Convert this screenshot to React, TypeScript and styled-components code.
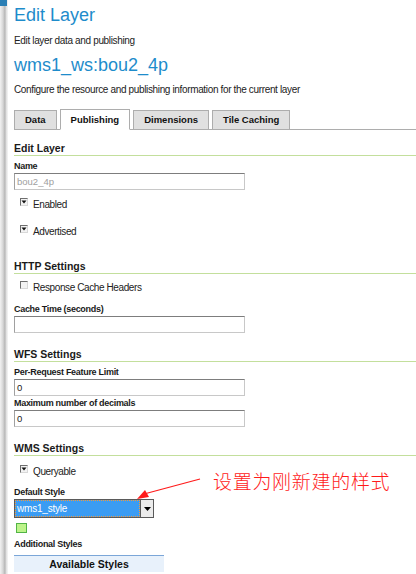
import React from "react";
import styled, { createGlobalStyle } from "styled-components";

const Global = createGlobalStyle`
  html, body { margin: 0; padding: 0; background: #fff; }
  body { font-family: "Liberation Sans", Arial, sans-serif; font-size: 10px; color: #222; }
  #root { width: 416px; height: 574px; overflow: hidden; }
`;

const Frame = styled.div`
  display: flex;
  width: 416px;
  height: 574px;
  overflow: hidden;
  position: relative;
`;

const EdgeBar = styled.div`
  width: 8px;
  flex: none;
  background: linear-gradient(to right, #f2f2f2 0px, #d6d6d6 3px, #b4b4b4 5px, #dcdcdc 6px, #f6f6f6 8px);
  position: relative;
  &::before {
    content: "";
    position: absolute;
    left: 0;
    top: 0;
    width: 7px;
    height: 6px;
    background: #2b7fb5;
  }
`;

const Content = styled.div`
  flex: 1;
  padding: 4px 0 0 6px;
`;

const Title = styled.h1<{ $top: number }>`
  margin: ${(p) => p.$top}px 0 0 0;
  font-family: "Liberation Sans", Arial, sans-serif;
  font-weight: normal;
  font-size: 18px;
  color: #1e8ccb;
  line-height: 22px;
`;

const Sub = styled.p<{ $top: number }>`
  margin: ${(p) => p.$top}px 0 0 0;
  font-size: 10px;
  letter-spacing: -0.35px;
  line-height: 14px;
  color: #222;
`;

const Tabs = styled.div`
  display: flex;
  align-items: flex-end;
  gap: 3px;
  margin-top: 13px;
  border-bottom: 1px solid #adadad;
  height: 19px;
`;

const Tab = styled.div<{ $active?: boolean }>`
  height: ${(p) => (p.$active ? 21 : 19)}px;
  margin-bottom: ${(p) => (p.$active ? -1 : 0)}px;
  padding: 0 10px;
  background: ${(p) => (p.$active ? "#fff" : "#e0e0e0")};
  border: 1px solid #adadad;
  border-bottom: ${(p) => (p.$active ? "1px solid #fff" : "none")};
  box-sizing: border-box;
  font-weight: bold;
  font-size: 9.5px;
  line-height: ${(p) => (p.$active ? 20 : 18)}px;
  color: #111;
`;

const SectionHead = styled.h3<{ $top: number }>`
  margin: ${(p) => p.$top}px 0 0 0;
  font-size: 10.5px;
  font-weight: bold;
  line-height: 14px;
  border-bottom: 1px solid #c3df9c;
  color: #1a1a1a;
`;

const Label = styled.div<{ $top: number }>`
  margin-top: ${(p) => p.$top}px;
  font-size: 9px;
  letter-spacing: -0.3px;
  font-weight: bold;
  line-height: 11px;
  color: #1a1a1a;
`;

const Input = styled.div<{ $muted?: boolean }>`
  margin-top: 1px;
  width: 231px;
  height: 17px;
  box-sizing: border-box;
  border: 1px solid #c8c8c8;
  border-top-color: #7d7d7d;
  border-left-color: #a0a0a0;
  padding: 0 2px;
  font-size: 9.5px;
  line-height: 15px;
  color: ${(p) => (p.$muted ? "#a0a0a0" : "#222")};
`;

const CheckRow = styled.div<{ $top: number }>`
  display: flex;
  align-items: flex-start;
  gap: 5px;
  margin-top: ${(p) => p.$top}px;
  padding-left: 6px;
  font-size: 10px;
  letter-spacing: -0.4px;
  line-height: 12px;
`;

const Box = styled.span`
  width: 8px;
  height: 8px;
  flex: none;
  margin-top: -1px;
  box-sizing: border-box;
  border: 1px solid #6e6e6e;
  border-right-color: #d8d8d8;
  border-bottom-color: #d8d8d8;
  background: #f3f3f3;
  display: flex;
  align-items: center;
  justify-content: center;
`;

const CheckText = styled.span`
  color: #222;
`;

const SelectWrap = styled.div`
  margin-top: 1px;
  display: flex;
  width: 140px;
  height: 19px;
  box-sizing: border-box;
  border: 1px solid #5a5a5a;
  background: #5a5a5a;
  gap: 1px;
`;

const SelectValue = styled.div`
  flex: 1;
  background: #3b9cf3;
  border: 1px dotted #f39a3c;
  color: #fff;
  font-size: 10px;
  letter-spacing: -0.2px;
  line-height: 15px;
  padding-left: 1px;
`;

const SelectBtn = styled.div`
  width: 12px;
  background: #ececec;
  display: flex;
  align-items: center;
  justify-content: center;
`;

const Swatch = styled.div`
  margin: 5px 0 0 2px;
  width: 11px;
  height: 10px;
  box-sizing: border-box;
  border: 1px solid #52b447;
  background: #bdf48a;
`;

const AvailHead = styled.div`
  margin-top: 5px;
  width: 150px;
  height: 17px;
  box-sizing: border-box;
  border-top: 1px solid #7ba6d8;
  background: #e8f1fb;
  text-align: center;
  font-weight: bold;
  font-size: 10.5px;
  line-height: 16px;
  color: #111;
`;

const Note = styled.div`
  position: absolute;
  left: 213px;
  top: 469px;
  font-family: "Noto Sans CJK SC", sans-serif;
  font-weight: 300;
  font-size: 19px;
  line-height: 24px;
  color: #ff1a1a;
  letter-spacing: 0.7px;
`;

const Arrow = styled.svg`
  position: absolute;
  left: 130px;
  top: 474px;
`;

function Check() {
  return (
    <svg width="6" height="6" viewBox="0 0 6 6">
      <path d="M0.5 1.5 H5.5 L3 4.5 Z" fill="#111" />
    </svg>
  );
}

export default function App() {
  return (
    <Frame>
      <Global />
      <EdgeBar />
      <Content>
        <Title $top={0}>Edit Layer</Title>
        <Sub $top={8}>Edit layer data and publishing</Sub>
        <Title $top={6}>wms1_ws:bou2_4p</Title>
        <Sub $top={7}>Configure the resource and publishing information for the current layer</Sub>
        <Tabs>
          <Tab>Data</Tab>
          <Tab $active>Publishing</Tab>
          <Tab>Dimensions</Tab>
          <Tab>Tile Caching</Tab>
        </Tabs>
        <SectionHead $top={11}>Edit Layer</SectionHead>
        <Label $top={5}>Name</Label>
        <Input $muted>bou2_4p</Input>
        <CheckRow $top={9}>
          <Box><Check /></Box>
          <CheckText>Enabled</CheckText>
        </CheckRow>
        <CheckRow $top={15}>
          <Box><Check /></Box>
          <CheckText>Advertised</CheckText>
        </CheckRow>
        <SectionHead $top={21}>HTTP Settings</SectionHead>
        <CheckRow $top={8}>
          <Box />
          <CheckText>Response Cache Headers</CheckText>
        </CheckRow>
        <Label $top={10}>Cache Time (seconds)</Label>
        <Input />
        <SectionHead $top={14}>WFS Settings</SectionHead>
        <Label $top={5}>Per-Request Feature Limit</Label>
        <Input>0</Input>
        <Label $top={2}>Maximum number of decimals</Label>
        <Input>0</Input>
        <SectionHead $top={14}>WMS Settings</SectionHead>
        <CheckRow $top={10}>
          <Box><Check /></Box>
          <CheckText>Queryable</CheckText>
        </CheckRow>
        <Label $top={9}>Default Style</Label>
        <SelectWrap>
          <SelectValue>wms1_style</SelectValue>
          <SelectBtn>
            <svg width="7" height="4" viewBox="0 0 7 4">
              <path d="M0 0 H7 L3.5 4 Z" fill="#000" />
            </svg>
          </SelectBtn>
        </SelectWrap>
        <Swatch />
        <Label $top={6}>Additional Styles</Label>
        <AvailHead>Available Styles</AvailHead>
      </Content>
      <Note>设置为刚新建的样式</Note>
      <Arrow width="80" height="30" viewBox="0 0 80 30">
        <path d="M70 5 L14 20" stroke="#ff1a1a" strokeWidth="1.2" fill="none" />
        <path d="M7 25 L15 16 L19 23 Z" fill="#ff1a1a" />
      </Arrow>
    </Frame>
  );
}
